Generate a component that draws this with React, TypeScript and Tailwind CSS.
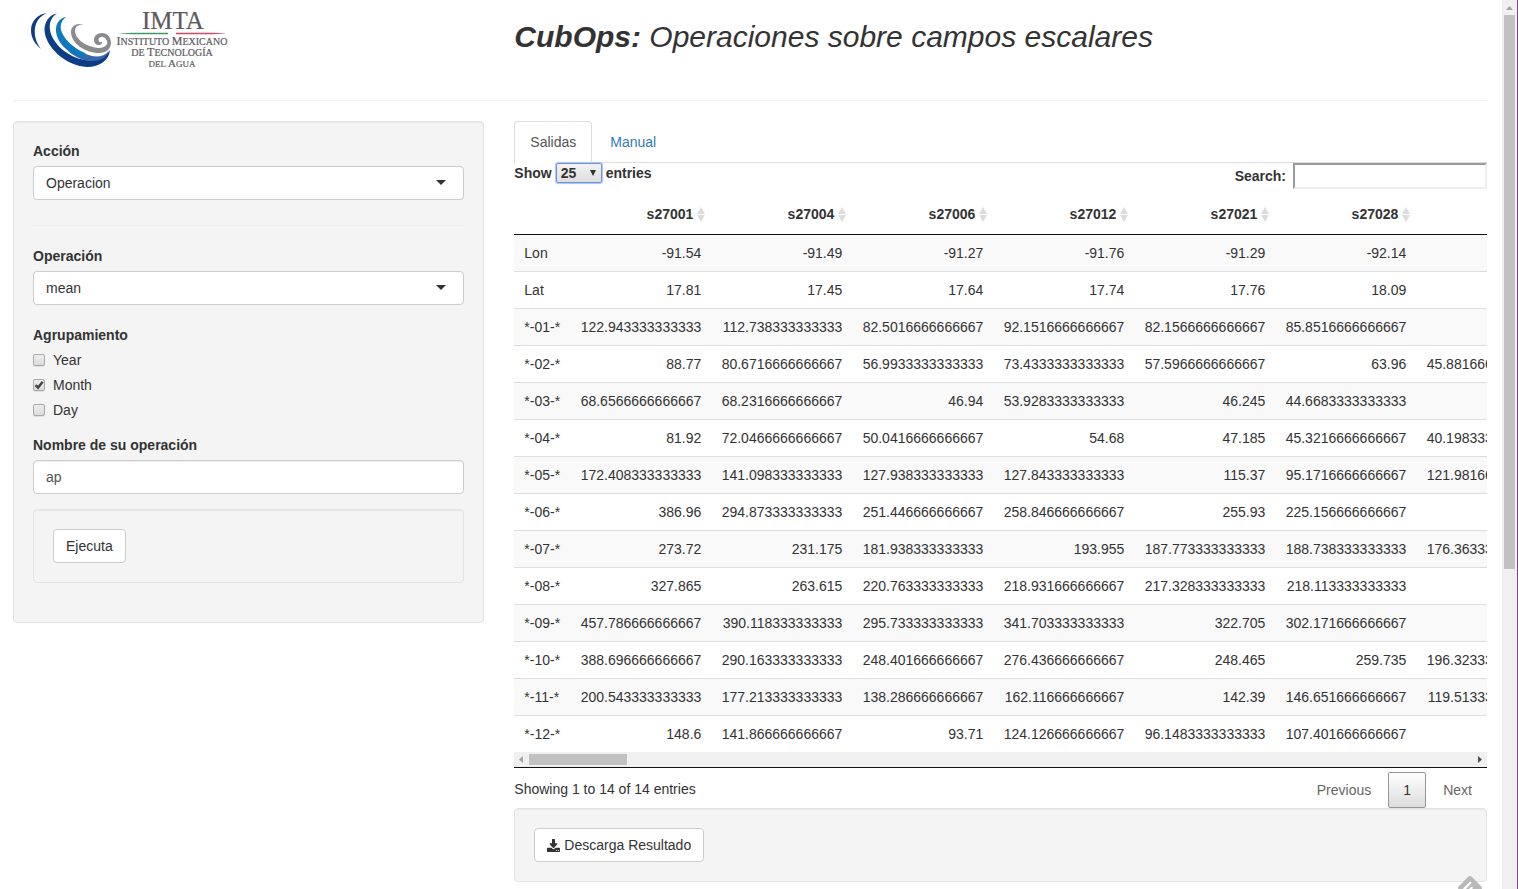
import React from "react";

const stations = ["s27001", "s27004", "s27006", "s27012", "s27021", "s27028", ""];

const rows: string[][] = [
  ["Lon", "-91.54", "-91.49", "-91.27", "-91.76", "-91.29", "-92.14", ""],
  ["Lat", "17.81", "17.45", "17.64", "17.74", "17.76", "18.09", ""],
  ["*-01-*", "122.943333333333", "112.738333333333", "82.5016666666667", "92.1516666666667", "82.1566666666667", "85.8516666666667", ""],
  ["*-02-*", "88.77", "80.6716666666667", "56.9933333333333", "73.4333333333333", "57.5966666666667", "63.96", "45.8816666666667"],
  ["*-03-*", "68.6566666666667", "68.2316666666667", "46.94", "53.9283333333333", "46.245", "44.6683333333333", ""],
  ["*-04-*", "81.92", "72.0466666666667", "50.0416666666667", "54.68", "47.185", "45.3216666666667", "40.1983333333333"],
  ["*-05-*", "172.408333333333", "141.098333333333", "127.938333333333", "127.843333333333", "115.37", "95.1716666666667", "121.981666666667"],
  ["*-06-*", "386.96", "294.873333333333", "251.446666666667", "258.846666666667", "255.93", "225.156666666667", ""],
  ["*-07-*", "273.72", "231.175", "181.938333333333", "193.955", "187.773333333333", "188.738333333333", "176.363333333333"],
  ["*-08-*", "327.865", "263.615", "220.763333333333", "218.931666666667", "217.328333333333", "218.113333333333", ""],
  ["*-09-*", "457.786666666667", "390.118333333333", "295.733333333333", "341.703333333333", "322.705", "302.171666666667", ""],
  ["*-10-*", "388.696666666667", "290.163333333333", "248.401666666667", "276.436666666667", "248.465", "259.735", "196.323333333333"],
  ["*-11-*", "200.543333333333", "177.213333333333", "138.286666666667", "162.116666666667", "142.39", "146.651666666667", "119.513333333333"],
  ["*-12-*", "148.6", "141.866666666667", "93.71", "124.126666666667", "96.1483333333333", "107.401666666667", ""],
];

const well = "rounded border border-[#e3e3e3] bg-[#f4f4f4] p-[19px] shadow-[inset_0_1px_1px_rgba(0,0,0,0.05)]";
const button = "inline-flex h-[34px] items-center rounded border border-[#ccc] bg-white px-3 text-[#333]";

function Logo() {
  return (
    <svg className="h-[60px] w-[200px]" viewBox="0 0 200 60" role="img" aria-label="IMTA">
      <path d="M18 3C9 4 2 11 2 20c0 8 4 14 10 19C7 32 5 26 6 18 7 11 11 6 18 3z" fill="#0b3e85" />
      <path d="M28 3.500C20 5 15.500 12 15.500 20 16 36 36 56 58 57c13 0 22-7 23-17-5 8-15 11-25 10C38 47 23 33 21 20c-1-7 1-13 7-16.500z" fill="#0b3e85" />
      <path d="M55 43c9 5 19 5 25-2-3 7-9 10-17 10-9 0-17-4-24-10z" fill="#3a67ab" />
      <path d="M37 7C31 8 26.500 13 27 21c1 13 14 24 29 27v-5C44 38 34 28 32 20c-1-6 1-10 5-13z" fill="#0d78bd" />
      <path d="M55 15c-6-2.500-13 0-13 7 0 11 14 21 28 21 8 0 12-5 12-10 0-6-4-10-9-10s-8 3-8 7c0 3 2 5 5 5 2 0 3.500-1.500 3-3-2 .5-4-.5-3.500-2.500.5-2 2.500-3 4.500-2.500 3 1 5 4 4 7-2 4-8 5-14 3-9-2-18-9-18-16 0-5 4-7 9-6z" fill="#8b8b8d" />
      <g fill="#5c5a5f" stroke="#5c5a5f" strokeWidth="0.2" fontFamily="Liberation Serif, serif" textAnchor="middle">
        <text x="144" y="19" fontSize="25">IMTA</text>
        <text x="143" y="35" fontSize="10">
          <tspan fontSize="12">I</tspan>NSTITUTO <tspan fontSize="12">M</tspan>EXICANO
        </text>
        <text x="143" y="46" fontSize="10">
          DE <tspan fontSize="12">T</tspan>ECNOLOGÍA
        </text>
        <text x="143" y="57" fontSize="9">
          DEL <tspan fontSize="11">A</tspan>GUA
        </text>
      </g>
      <path d="M89 23.600l14-.8h36v1.400h-36z" fill="#3f9c62" />
      <path d="M198 23.600l-14-.8h-37v1.400h37z" fill="#d4476a" />
    </svg>
  );
}

function DropDown({ id, label, value }: { id: string; label: string; value: string }) {
  return (
    <div>
      <label htmlFor={id} className="mb-[5px] block font-bold">{label}</label>
      <div className="relative">
        <select id={id} className="block h-[34px] w-full appearance-none rounded border border-[#ccc] bg-white px-3 text-[#333]">
          <option>{value}</option>
        </select>
        <svg className="pointer-events-none absolute right-[18px] top-[14px] h-[5px] w-[10px]" viewBox="0 0 10 5">
          <path d="M0 0h10L5 5z" fill="#333" />
        </svg>
      </div>
    </div>
  );
}

function CheckBox({ label, checked = false }: { label: string; checked?: boolean }) {
  return (
    <label className="flex h-5 items-center gap-2">
      <span className="relative flex size-3">
        <input
          type="checkbox"
          defaultChecked={checked}
          className="peer size-3 appearance-none rounded-xs border border-[#a8a8a8] bg-linear-to-b from-[#ededed] to-[#dcdcdc] shadow-[0_1px_0_rgba(0,0,0,0.08)]"
        />
        <svg className="pointer-events-none absolute inset-0 hidden size-3 peer-checked:block" viewBox="0 0 12 12">
          <path d="M2.600 6.200l2.400 2.500L9.700 2.800" fill="none" stroke="#444" strokeWidth="2.500" />
        </svg>
      </span>
      {label}
    </label>
  );
}

function SortIcon() {
  return (
    <svg className="h-[15px] w-2" viewBox="0 0 8 15">
      <path d="M4 0l4 7H0zM0 8h8l-4 7z" fill="#dcdcdc" />
    </svg>
  );
}

function Sidebar() {
  return (
    <form className={`${well} pb-[39px]`} onSubmit={(e) => e.preventDefault()}>
      <DropDown id="accion" label="Acción" value="Operacion" />
      <hr className="mt-[25px] mb-5 border-[#eee]" />
      <DropDown id="operacion" label="Operación" value="mean" />
      <fieldset className="mt-5 flex flex-col gap-[5px]">
        <legend className="mb-[5px] font-bold">Agrupamiento</legend>
        <CheckBox label="Year" />
        <CheckBox label="Month" checked />
        <CheckBox label="Day" />
      </fieldset>
      <label htmlFor="nombre" className="mt-[15px] mb-[5px] block font-bold">Nombre de su operación</label>
      <input
        id="nombre"
        defaultValue="ap"
        className="block h-[34px] w-full rounded border border-[#ccc] bg-white px-3 text-[#555] shadow-[inset_0_1px_1px_rgba(0,0,0,0.075)]"
      />
      <div className={`${well} mt-[15px]`}>
        <button className={button}>Ejecuta</button>
      </div>
    </form>
  );
}

function ResultTable() {
  return (
    <div className="border-b border-[#111]">
      <div className="overflow-hidden">
        <table className="w-[1043px] table-fixed border-separate border-spacing-0">
          <colgroup>
            <col className="w-[56px]" />
            {stations.map((_, i) => (
              <col key={i} className="w-[141px]" />
            ))}
          </colgroup>
          <thead>
            <tr>
              <th className="border-b border-[#111]" />
              {stations.map((s, i) => (
                <th key={i} className="border-b border-[#111] py-[10px] pr-[6px] text-right font-bold">
                  <span className="flex h-5 items-center justify-end gap-1">
                    {s}
                    {s && <SortIcon />}
                  </span>
                </th>
              ))}
            </tr>
          </thead>
          <tbody>
            {rows.map((r) => (
              <tr key={r[0]} className="group odd:bg-[#f9f9f9]">
                {r.map((v, i) => (
                  <td key={i} className="border-t border-[#ddd] px-[10px] py-2 text-right whitespace-nowrap first:text-left group-first:border-t-0">
                    {v}
                  </td>
                ))}
              </tr>
            ))}
          </tbody>
        </table>
      </div>
      <div className="flex h-[15px] items-center justify-between bg-[#f0f0f0] px-[5px]">
        <div className="flex items-center gap-[6px]">
          <svg className="h-[7px] w-1" viewBox="0 0 4 7">
            <path d="M4 0v7L0 3.500z" fill="#a3a3a3" />
          </svg>
          <div className="h-[11px] w-[98px] bg-[#c1c1c1]" />
        </div>
        <svg className="h-[7px] w-1" viewBox="0 0 4 7">
          <path d="M0 0v7l4-3.500z" fill="#505050" />
        </svg>
      </div>
    </div>
  );
}

function Results() {
  return (
    <main className="col-span-2 min-w-0">
      <nav className="flex h-[42px] border-b border-[#ddd]">
        <a href="#salidas" className="mr-[2px] -mb-px rounded-t border border-b-0 border-[#ddd] bg-white px-[15px] py-[10px] text-[#555]">
          Salidas
        </a>
        <a href="#manual" className="border border-transparent px-[15px] py-[10px] text-[#337ab7]">
          Manual
        </a>
      </nav>
      <div className="flex h-[31px] items-start justify-between font-bold">
        <label className="flex items-center gap-1">
          Show
          <span className="relative">
            <select className="block h-5 w-[46px] appearance-none rounded-xs border border-[#6b95d8] bg-linear-to-b from-[#f3f3f3] to-[#dedede] px-1 leading-4 font-bold shadow-[0_0_1px_1px_#a9c4f0]">
              <option>25</option>
            </select>
            <svg className="pointer-events-none absolute top-[7px] right-[6px] size-[6px]" viewBox="0 0 6 6">
              <path d="M0 0h6L3 6z" fill="#333" />
            </svg>
          </span>
          entries
        </label>
        <label className="flex items-center gap-[7px]">
          Search:
          <input type="search" className="h-[26px] w-[194px] border-2 border-t-[#9a9a9a] border-r-[#eee] border-b-[#eee] border-l-[#9a9a9a] bg-white font-normal" />
        </label>
      </div>
      <ResultTable />
      <div className="flex items-start justify-between pt-1">
        <p className="pt-[7px]">Showing 1 to 14 of 14 entries</p>
        <div className="flex gap-[2px] text-[#666]">
          <button className="h-9 px-[15px]">Previous</button>
          <button className="h-9 w-[38px] rounded-xs border border-[#979797] bg-linear-to-b from-white to-[#dcdcdc] text-[#333]">1</button>
          <button className="h-9 px-[15px]">Next</button>
        </div>
      </div>
      <div className={well}>
        <button className={`${button} gap-1`}>
          <svg className="h-[13px] w-[13px]" viewBox="0 0 1664 1536" preserveAspectRatio="none" fill="#333">
            <path d="M1280 1344q0-26-19-45t-45-19-45 19-19 45 19 45 45 19 45-19 19-45zm256 0q0-26-19-45t-45-19-45 19-19 45 19 45 45 19 45-19 19-45zm128-224v320q0 40-28 68t-68 28h-1472q-40 0-68-28t-28-68v-320q0-40 28-68t68-28h465l135 136q58 56 136 56t136-56l136-136h464q40 0 68 28t28 68zm-325-569q17 41-14 70l-448 448q-18 19-45 19t-45-19l-448-448q-31-29-14-70 17-39 59-39h256v-448q0-26 19-45t45-19h256q26 0 45 19t19 45v448h256q42 0 59 39z" />
          </svg>
          Descarga Resultado
        </button>
      </div>
    </main>
  );
}

export default function App() {
  return (
    <div className="flex h-screen overflow-hidden bg-white font-['Liberation_Sans',Arial,sans-serif] text-sm/5 text-[#333]">
      <div className="relative min-w-0 flex-1 overflow-hidden pr-[15px] pl-[13px]">
        <header className="grid h-[101px] grid-cols-3 gap-x-[30px] border-b border-[#eee]">
          <div className="pt-[10px] pl-4">
            <Logo />
          </div>
          <h1 className="col-span-2 pt-5 text-[30px]/[33px] italic">
            <strong>CubOps:</strong> Operaciones sobre campos escalares
          </h1>
        </header>
        <div className="mt-5 grid grid-cols-3 items-start gap-x-[30px]">
          <Sidebar />
          <Results />
        </div>
        <svg className="absolute right-5 -bottom-[11px] size-6" viewBox="0 0 24 24">
          <path d="M10 1q2-2 4 0l9 9q2 2 0 4l-7 8H8l-7-8q-2-2 0-4z" fill="#b8b8b8" />
          <path d="M5 12.500l6.500-6.500q1-.8 1.600 0t0 1.600L7 14zM10 14l3-3q1-.6 1.500 0t0 1.500L12 15z" fill="#fff" />
        </svg>
      </div>
      <div className="flex w-4 flex-col items-center gap-[5px] border-r border-[#8e3a9d] bg-[#f0f0f0] pt-[6px]">
        <svg className="h-1 w-[7px]" viewBox="0 0 7 4">
          <path d="M0 4h7L3.500 0z" fill="#a3a3a3" />
        </svg>
        <div className="h-[554px] w-[11px] bg-[#c1c1c1]" />
      </div>
    </div>
  );
}
